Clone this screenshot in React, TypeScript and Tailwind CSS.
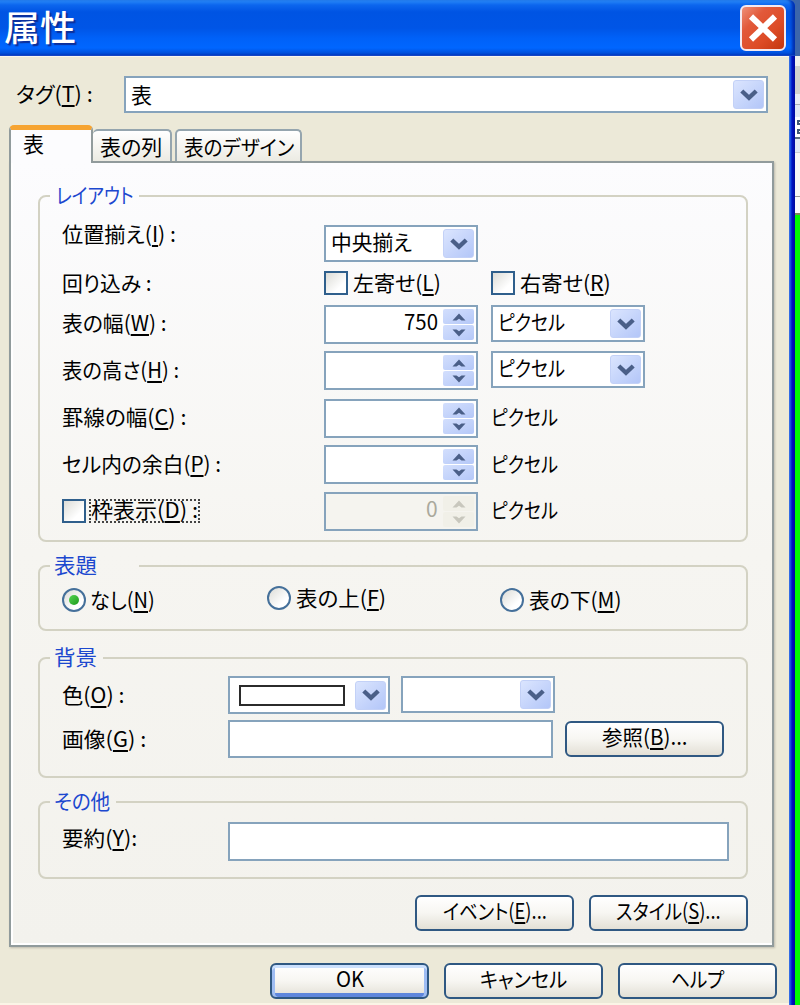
import React, { useLayoutEffect, useRef, useState } from 'react';

interface FitTextProps {
  width: number;
  className?: string;
  children: React.ReactNode;
}

// Condenses a run of text to the given width, like the proportional UI Gothic face
const FitText: React.FC<FitTextProps> = ({ width, className = '', children }) => {
  const ref = useRef<HTMLSpanElement>(null);
  const [scale, setScale] = useState(1);

  useLayoutEffect(() => {
    if (ref.current) setScale(width / ref.current.offsetWidth);
  }, [width]);

  return (
    <span className={`block shrink-0 whitespace-nowrap pb-[2px] leading-[16px] ${className}`} style={{ width }}>
      <span ref={ref} className="inline-block origin-left" style={{ transform: `scaleX(${scale})` }}>
        {children}
      </span>
    </span>
  );
};

const Key: React.FC<{ k: string }> = ({ k }) => (
  <>
    (<span className="underline decoration-2 underline-offset-[3px]">{k}</span>)
  </>
);

const DropButton: React.FC = () => (
  <span className="flex h-[29px] w-[31px] shrink-0 items-center justify-center rounded-[3px] border border-[#c3d1f7] bg-gradient-to-br from-[#dbe5fe] to-[#b3c6f8]">
    <svg width="18" height="12" viewBox="0 0 18 12" fill="none">
      <path d="M1.8 2 9 8.8 16.2 2" stroke="#4a5f88" strokeWidth="4.4" />
    </svg>
  </span>
);

const Combo: React.FC<{ className: string; children?: React.ReactNode }> = ({ className, children }) => (
  <div className={`flex shrink-0 items-center justify-between border-2 border-[#86a3bc] bg-white pl-[5px] pr-[2px] ${className}`}>
    <div>{children}</div>
    <DropButton />
  </div>
);

const SpinArrow: React.FC<{ down?: boolean; disabled?: boolean }> = ({ down, disabled }) => (
  <span
    className={`flex h-[15px] w-[31px] items-center justify-center rounded-[2px] ${
      disabled ? 'bg-[#f1f0e8]' : 'bg-gradient-to-br from-[#d3dffd] to-[#b5c8f8]'
    }`}
  >
    <svg width="14" height="8" viewBox="0 0 14 8">
      <path
        d={down ? 'M0.5 0.5H4.5L7 2.3 9.5 0.5H13.5L7 7.5Z' : 'M0.5 7.5H4.5L7 5.7 9.5 7.5H13.5L7 0.5Z'}
        fill={disabled ? '#c8c7bd' : '#4a5f88'}
      />
    </svg>
  </span>
);

const Spinner: React.FC<{ disabled?: boolean; children?: React.ReactNode }> = ({ disabled, children }) => (
  <div
    className={`flex h-[39px] w-[154px] shrink-0 items-start justify-end gap-[5px] border-2 border-[#86a3bc] pr-[2px] pt-[2px] ${
      disabled ? 'bg-[#f5f4ef] text-[#aaa99d]' : 'bg-white'
    }`}
  >
    {children}
    <div className="flex flex-col gap-px">
      <SpinArrow disabled={disabled} />
      <SpinArrow down disabled={disabled} />
    </div>
  </div>
);

const CheckBox: React.FC = () => (
  <span className="block h-6 w-6 shrink-0 border-2 border-[#2f5f8c] bg-gradient-to-br from-[#dcdcd7] to-white to-70%" />
);

const Radio: React.FC<{ checked?: boolean }> = ({ checked }) => (
  <span className="flex h-6 w-6 shrink-0 items-center justify-center rounded-full border-2 border-[#45709a] bg-gradient-to-br from-[#dcdcd7] to-white to-70%">
    {checked && <span className="h-2.5 w-2.5 rounded-full bg-gradient-to-br from-[#55d551] to-[#1a9a18]" />}
  </span>
);

const Button: React.FC<{ isDefault?: boolean; children: React.ReactNode }> = ({ isDefault, children }) => (
  <button
    className={`flex h-9 w-[159px] shrink-0 items-start justify-center rounded-[6px] border-2 border-[#2f5882] bg-gradient-to-b from-white via-[#f7f6f2] to-[#e3e0d6] pt-[5px] ${
      isDefault ? 'shadow-[inset_0_3px_0_#cbe0fd,inset_3px_0_0_#9fbdf3,inset_-3px_0_0_#9fbdf3,inset_0_-4px_0_#5f87dd]' : ''
    }`}
  >
    {children}
  </button>
);

interface GroupProps {
  legend: string;
  legendWidth: number;
  legendClass: string;
  className: string;
  children: React.ReactNode;
}

const Group: React.FC<GroupProps> = ({ legend, legendWidth, legendClass, className, children }) => (
  <fieldset className={`w-[710px] rounded-[8px] border-2 border-[#d3d2c3] pl-[10px] ${className}`}>
    <legend className={`flex h-6 items-center pb-[2px] text-[#1c48cf] ${legendClass}`}>
      <FitText width={legendWidth}>{legend}</FitText>
    </legend>
    <div className="pl-3">{children}</div>
  </fieldset>
);

const App: React.FC = () => {
  return (
    <div
      lang="ja"
      className="flex h-[1005px] w-[800px] overflow-hidden bg-[#3c66ab] text-[21px] text-black [font-family:'Noto_Sans_CJK_JP',sans-serif] [font-feature-settings:'palt']"
    >
      <div className="flex w-[795px] shrink-0 flex-col">
        {/* Title bar */}
        <header className="flex h-14 shrink-0 items-start justify-between rounded-tr-[6px] border-b border-[#1545c4] bg-[linear-gradient(180deg,#2b8cf8_0px,#0c66ee_5px,#0054e3_12px,#0055e6_28px,#0061f8_38px,#0066ff_48px,#0050dc_53px,#0038bc_56px)] pl-[4px] pr-[9px] pt-[5px] shadow-[inset_-4px_0_3px_-1px_#0030b0]">
          <FitText width={72} className="mt-[13px] text-[35px] font-medium text-white [text-shadow:2px_2px_1px_#0b2f9b]">
            属性
          </FitText>
          <button className="flex h-[46px] w-[46px] items-center justify-center rounded-[6px] border-2 border-[#f4e9ef] bg-[linear-gradient(135deg,#ee9078_0%,#e2593a_30%,#dd4b26_65%,#c33610_100%)]">
            <svg width="30" height="30" viewBox="0 0 30 30">
              <path d="M3 3.5 27 26.5M27 3.5 3 26.5" stroke="white" strokeWidth="6" />
            </svg>
          </button>
        </header>

        <div className="flex min-h-0 flex-1">
          <main className="flex w-[789px] flex-col border-t border-t-[#f8f6ee] bg-[#ece9d8]">
            <div className="flex h-[68px] shrink-0 items-start pl-4 pt-[19px]">
              <FitText width={77} className="mr-[31px] mt-[9px]">
                タグ<Key k="T" /> :
              </FitText>
              <Combo className="h-[37px] w-[644px]">
                <FitText width={21}>表</FitText>
              </Combo>
            </div>

            {/* Tabs */}
            <div className="z-10 flex h-[38px] shrink-0 items-end pl-[9px]">
              <div className="flex h-[38px] w-[84px] flex-col rounded-t-[5px] border-x-2 border-t-[5px] border-x-[#919b9c] border-t-[#f6a431] bg-[#fcfcfe] pl-3 pt-[5px]">
                <FitText width={21}>表</FitText>
              </div>
              <div className="mb-[2px] flex h-8 w-[79px] rounded-t-[5px] border-2 border-b-0 border-l-0 border-[#95a5ae] bg-gradient-to-b from-white to-[#ecebe3] pl-[7px] pt-[7px]">
                <FitText width={62}>表の列</FitText>
              </div>
              <div className="mb-[2px] ml-[3px] flex h-8 w-[127px] rounded-t-[5px] border-2 border-b-0 border-[#95a5ae] bg-gradient-to-b from-white to-[#ecebe3] pl-[7px] pt-[7px]">
                <FitText width={110}>表のデザイン</FitText>
              </div>
            </div>

            <section className="-mt-[2px] ml-[9px] flex h-[786px] w-[765px] shrink-0 flex-col border-2 border-[#919b9c] bg-gradient-to-b from-[#fcfcfe] via-[#f6f5f1] to-[#f3f2ed] pl-[27px] pt-[21px] shadow-[inset_0_-2px_0_#fff,inset_2px_0_0_#fff,1px_1px_2px_#bdbbad]">
              <Group legend="レイアウト" legendWidth={78} legendClass="w-[89px] pl-[6px]" className="h-[358px]">
                <div className="mt-[17px] flex h-[46px] items-start">
                  <div className="w-[262px]">
                    <FitText width={114}>
                      位置揃え<Key k="I" /> :
                    </FitText>
                  </div>
                  <Combo className="h-[37px] w-[154px]">
                    <FitText width={81} className="mb-1">中央揃え</FitText>
                  </Combo>
                </div>
                <div className="flex h-[34px] items-start">
                  <div className="w-[262px] pt-[3px]">
                    <FitText width={90}>回り込み :</FitText>
                  </div>
                  <label className="flex w-[167px] items-center gap-[5px]">
                    <CheckBox />
                    <FitText width={88}>
                      左寄せ<Key k="L" />
                    </FitText>
                  </label>
                  <label className="flex items-center gap-[5px]">
                    <CheckBox />
                    <FitText width={91}>
                      右寄せ<Key k="R" />
                    </FitText>
                  </label>
                </div>
                <div className="flex h-[46px] items-start">
                  <div className="w-[262px] pt-[9px]">
                    <FitText width={104}>
                      表の幅<Key k="W" /> :
                    </FitText>
                  </div>
                  <Spinner>
                    <FitText width={34} className="mt-[4px]">750</FitText>
                  </Spinner>
                  <Combo className="ml-[13px] h-[37px] w-[154px]">
                    <FitText width={67} className="mb-[3px]">ピクセル</FitText>
                  </Combo>
                </div>
                <div className="flex h-12 items-start">
                  <div className="w-[262px] pt-[10px]">
                    <FitText width={117}>
                      表の高さ<Key k="H" /> :
                    </FitText>
                  </div>
                  <Spinner />
                  <Combo className="ml-[13px] h-[37px] w-[154px]">
                    <FitText width={67} className="mb-[3px]">ピクセル</FitText>
                  </Combo>
                </div>
                <div className="flex h-[46px] items-start">
                  <div className="w-[262px] pt-[9px]">
                    <FitText width={124}>
                      罫線の幅<Key k="C" /> :
                    </FitText>
                  </div>
                  <Spinner />
                  <FitText width={67} className="ml-[13px] mt-[9px]">ピクセル</FitText>
                </div>
                <div className="flex h-[47px] items-start">
                  <div className="w-[262px] pt-[10px]">
                    <FitText width={159}>
                      セル内の余白<Key k="P" /> :
                    </FitText>
                  </div>
                  <Spinner />
                  <FitText width={67} className="ml-[13px] mt-[10px]">ピクセル</FitText>
                </div>
                <div className="flex items-start">
                  <div className="flex w-[262px] items-center gap-[3px] pt-[7px]">
                    <CheckBox />
                    <div className="flex h-6 items-start border-2 border-dotted border-[#444]">
                      <FitText width={107}>
                        枠表示<Key k="D" /> :
                      </FitText>
                    </div>
                  </div>
                  <Spinner disabled>
                    <FitText width={12} className="mt-[4px]">0</FitText>
                  </Spinner>
                  <FitText width={67} className="ml-[13px] mt-[9px]">ピクセル</FitText>
                </div>
              </Group>

              <Group legend="表題" legendWidth={43} legendClass="w-[89px] pl-[4px]" className="mt-[12px] h-[77px]">
                <div className="flex items-start pt-[8px]">
                  <label className="flex w-[205px] items-center gap-[4px] pt-[2px]">
                    <Radio checked />
                    <FitText width={65}>
                      なし<Key k="N" />
                    </FitText>
                  </label>
                  <label className="flex w-[233px] items-center gap-[5px]">
                    <Radio />
                    <FitText width={90}>
                      表の上<Key k="F" />
                    </FitText>
                  </label>
                  <label className="flex items-center gap-[5px] pt-[2px]">
                    <Radio />
                    <FitText width={93}>
                      表の下<Key k="M" />
                    </FitText>
                  </label>
                </div>
              </Group>

              <Group legend="背景" legendWidth={43} legendClass="w-[53px] pl-[4px]" className="mt-[15px] h-[132px]">
                <div className="mt-[6px] flex h-[44px] items-start">
                  <div className="w-[166px] pt-[10px]">
                    <FitText width={62}>
                      色<Key k="O" /> :
                    </FitText>
                  </div>
                  <Combo className="h-[38px] w-[162px]">
                    <div className="ml-[4px] h-[21px] w-[106px] border-2 border-[#2b2b2b] bg-white" />
                  </Combo>
                  <Combo className="ml-[11px] h-[37px] w-[154px]" />
                </div>
                <div className="flex items-start">
                  <div className="w-[166px] pt-[10px]">
                    <FitText width={84}>
                      画像<Key k="G" /> :
                    </FitText>
                  </div>
                  <div className="h-[38px] w-[325px] border-2 border-[#86a3bc] bg-white" />
                  <div className="ml-[12px] mt-px">
                    <Button>
                      <FitText width={86}>
                        参照<Key k="B" />...
                      </FitText>
                    </Button>
                  </div>
                </div>
              </Group>

              <Group legend="その他" legendWidth={56} legendClass="w-[66px] pl-[4px]" className="mt-[12px] h-[89px]">
                <div className="flex items-start pt-[8px]">
                  <div className="w-[166px] pt-[7px]">
                    <FitText width={75}>
                      要約<Key k="Y" />:
                    </FitText>
                  </div>
                  <div className="h-[39px] w-[501px] border-2 border-[#86a3bc] bg-white" />
                </div>
              </Group>

              <div className="mt-[16px] flex gap-[15px] pl-[377px]">
                <Button>
                  <FitText width={104}>
                    イベント<Key k="E" />...
                  </FitText>
                </Button>
                <Button>
                  <FitText width={105}>
                    スタイル<Key k="S" />...
                  </FitText>
                </Button>
              </div>
            </section>

            <div className="mt-[16px] flex gap-[15px] pl-[270px]">
              <Button isDefault>
                <FitText width={28}>OK</FitText>
              </Button>
              <Button>
                <FitText width={87}>キャンセル</FitText>
              </Button>
              <Button>
                <FitText width={53}>ヘルプ</FitText>
              </Button>
            </div>
            <div className="mt-[4px] h-[2px] w-full shrink-0 bg-[#fbf4e6]" />
          </main>
          {/* Window frame edge */}
          <div className="w-[6px] bg-[linear-gradient(90deg,#3f7ae8_0px,#0a3fdc_2px,#0012c4_3px,#000a9c_6px)]" />
        </div>
      </div>

      {/* Window behind the dialog */}
      <div className="flex w-[5px] flex-col">
        <div className="h-14" />
        <div className="h-[10px] bg-[#f1f1ee]" />
        <div className="h-[28px] bg-[#d2d2cf]" />
        <div className="h-[11px] border-b border-[#a9b0b8] bg-[#e9eef5]" />
        <div className="h-[12px] bg-[#e1e9f5]" />
        <div className="flex h-[22px] flex-col justify-evenly border-b-2 border-[#5d6f80] bg-white pl-[2px]">
          <div className="h-[5px] border-2 border-r-0 border-[#3f5878]" />
          <div className="h-[5px] border-2 border-r-0 border-[#3f5878]" />
        </div>
        <div className="h-[14px] border-b border-[#c9ced4] bg-[#e1e9f5]" />
        <div className="h-[44px] border-b border-[#9a9a9a] bg-[#f8f8f8]" />
        <div className="h-[18px] border-b-2 border-[#7b8a5a] bg-[#fbfbfb]" />
        <div className="flex-1 bg-[#00fb00]" />
      </div>
    </div>
  );
};

export default App;
